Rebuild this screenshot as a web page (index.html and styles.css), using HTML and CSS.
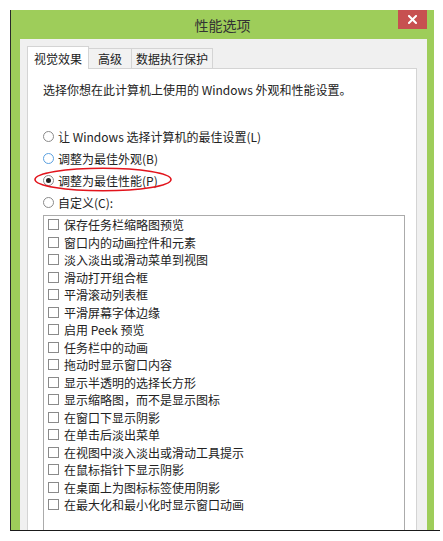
FILE: index.html
```html
<!DOCTYPE html>
<html lang="zh-CN">
<head>
    <meta charset="UTF-8">
    <meta name="viewport" content="width=device-width, initial-scale=1.0">
    <title>性能选项</title>
    <link rel="stylesheet" href="styles.css">
</head>
<body>

    <div class="frame">
        <div class="window">

            <!-- Title bar -->
            <div class="title-bar">
                <div></div>
                <div class="title">性能选项</div>
                <div class="close">
                    <svg width="9" height="9" viewBox="0 0 9 9">
                        <path d="M1 1 L8 8 M8 1 L1 8" stroke="#fff" stroke-width="2" stroke-linecap="square"/>
                    </svg>
                </div>
            </div>

            <!-- Client area -->
            <div class="client">
                <div class="tabs">
                    <div class="tab active">视觉效果</div>
                    <div class="tab">高级</div>
                    <div class="tab">数据执行保护</div>
                </div>

                <div class="panel">
                    <p class="intro">选择你想在此计算机上使用的 Windows 外观和性能设置。</p>

                    <div class="options">
                        <div class="radio"><span class="circle"></span>让 Windows 选择计算机的最佳设置(L)</div>
                        <div class="radio"><span class="circle hover"></span>调整为最佳外观(B)</div>
                        <div class="radio"><span class="circle checked"></span>调整为最佳性能(P)</div>
                        <div class="radio"><span class="circle"></span>自定义(C):</div>

                        <!-- hand drawn mark -->
                        <svg class="mark" width="150" height="30" viewBox="0 0 150 30">
                            <ellipse cx="70" cy="14.5" rx="68" ry="11.3" fill="none" stroke="#e2141c" stroke-width="1.6"/>
                        </svg>
                    </div>

                    <ul class="effects">
                        <li><span class="box"></span>保存任务栏缩略图预览</li>
                        <li><span class="box"></span>窗口内的动画控件和元素</li>
                        <li><span class="box"></span>淡入淡出或滑动菜单到视图</li>
                        <li><span class="box"></span>滑动打开组合框</li>
                        <li><span class="box"></span>平滑滚动列表框</li>
                        <li><span class="box"></span>平滑屏幕字体边缘</li>
                        <li><span class="box"></span>启用 Peek 预览</li>
                        <li><span class="box"></span>任务栏中的动画</li>
                        <li><span class="box"></span>拖动时显示窗口内容</li>
                        <li><span class="box"></span>显示半透明的选择长方形</li>
                        <li><span class="box"></span>显示缩略图，而不是显示图标</li>
                        <li><span class="box"></span>在窗口下显示阴影</li>
                        <li><span class="box"></span>在单击后淡出菜单</li>
                        <li><span class="box"></span>在视图中淡入淡出或滑动工具提示</li>
                        <li><span class="box"></span>在鼠标指针下显示阴影</li>
                        <li><span class="box"></span>在桌面上为图标标签使用阴影</li>
                        <li><span class="box"></span>在最大化和最小化时显示窗口动画</li>
                    </ul>
                </div>
            </div>

        </div>
    </div>

</body>
</html>
```

FILE: styles.css
```css
* {
    margin: 0;
    padding: 0;
    box-sizing: border-box;
}

html, body {
    height: 100%;
}

body {
    background-color: #fff;
    font-family: "Noto Sans CJK SC", "Noto Sans", sans-serif;
    font-size: 12px;
    color: #222;
    padding: 10px 0 0 10px;
    overflow: hidden;
}

/* Outer window frame */
.frame {
    width: 430px;
    height: 521px;
    display: flex;
    border-left: 1px solid #2a2a2a;
    border-bottom: 1px solid #1a1a1a;
}

.window {
    width: 423px;
    background-color: #9ecd5a;
    display: flex;
    flex-direction: column;
}

/* Title bar */
.title-bar {
    height: 29px;
    display: grid;
    grid-template-columns: 1fr auto 1fr;
    align-items: center;
}

.title {
    font-size: 14px;
    color: #333;
}

.close {
    justify-self: end;
    align-self: start;
    margin-right: 7px;
    width: 29px;
    height: 19px;
    background-color: #c75050;
    display: flex;
    align-items: center;
    justify-content: center;
}

/* Client area */
.client {
    flex: 1;
    margin: 0 7px 0 9px;
    padding: 7px 10px 0 7px;
    background-color: #f0f0f0;
    display: flex;
    flex-direction: column;
    overflow: hidden;
}

.tabs {
    height: 22px;
    display: flex;
    align-items: flex-end;
}

.tab {
    height: 20px;
    border: 1px solid #d4d4d4;
    border-bottom: none;
    background-color: #f2f2f2;
    display: flex;
    align-items: center;
    justify-content: center;
    margin-left: -1px;
}

.tab:nth-child(2) {
    width: 44px;
}

.tab:nth-child(3) {
    width: 82px;
}

.tab.active {
    width: 62px;
    height: 23px;
    margin-left: 0;
    margin-bottom: -1px;
    background-color: #fff;
    position: relative;
    z-index: 1;
}

.panel {
    flex: 1;
    background-color: #fff;
    border: 1px solid #d4d4d4;
    border-bottom: none;
    padding: 12px 11px 0 15px;
    display: flex;
    flex-direction: column;
}

.intro {
    line-height: 17px;
}

/* Radio buttons */
.options {
    margin-top: 27px;
    position: relative;
}

.radio {
    height: 22px;
    display: flex;
    align-items: center;
    gap: 4px;
}

.circle {
    width: 11px;
    height: 11px;
    border: 1px solid #8a8a8a;
    border-radius: 50%;
    background-color: #fff;
    display: flex;
    align-items: center;
    justify-content: center;
}

.circle.hover {
    border-color: #5aa0e0;
}

.circle.checked::after {
    content: "";
    width: 5px;
    height: 5px;
    border-radius: 50%;
    background-color: #222;
}

.mark {
    position: absolute;
    left: -10px;
    top: 40px;
}

/* Effect list */
.effects {
    margin-top: 2px;
    flex: 1;
    list-style: none;
    border: 1px solid #ababab;
    border-bottom: none;
    padding: 0 0 0 4px;
}

.effects li {
    height: 17.5px;
    display: flex;
    align-items: center;
    gap: 5px;
}

.box {
    width: 11px;
    height: 11px;
    border: 1px solid #8a8a8a;
    background-color: #fff;
}
```
